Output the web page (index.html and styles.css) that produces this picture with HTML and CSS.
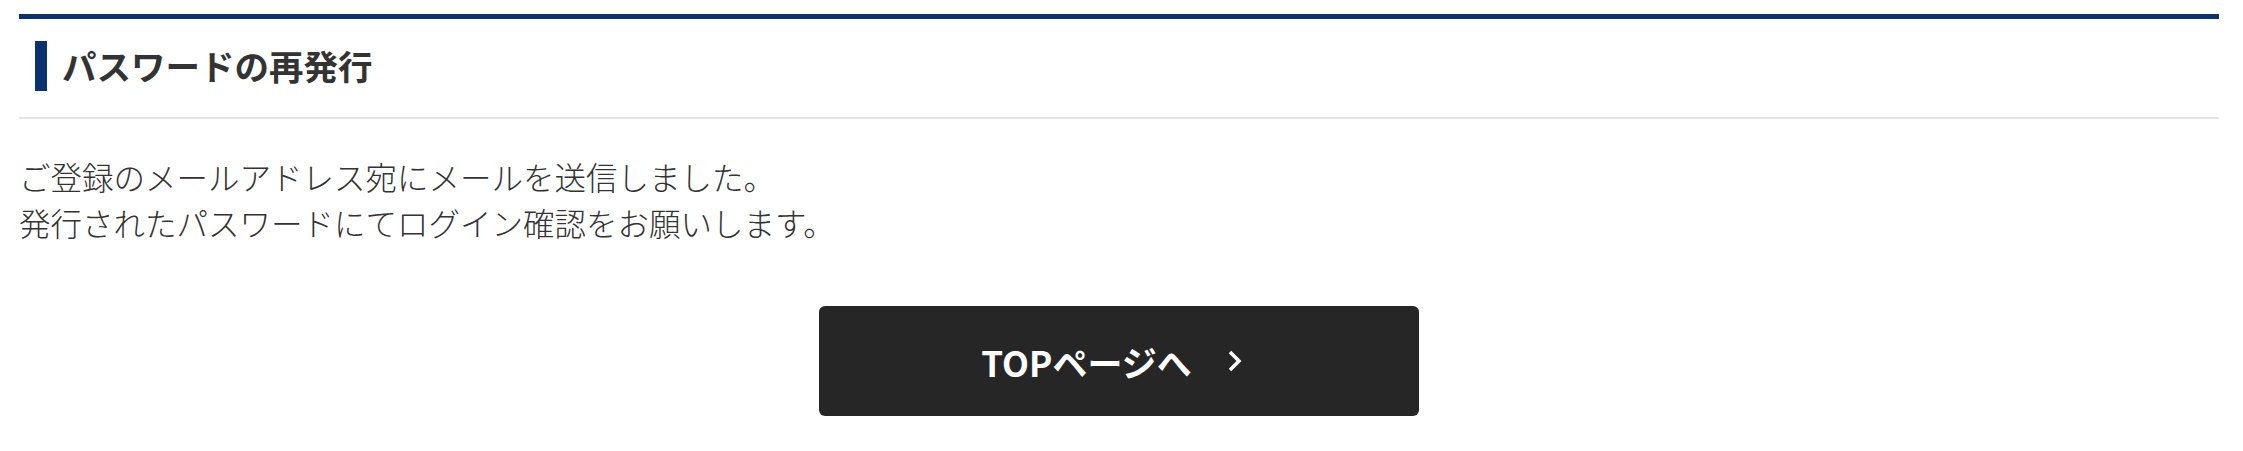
FILE: index.html
```html
<!DOCTYPE html>
<html lang="ja">
<head>
    <meta charset="UTF-8">
    <meta name="viewport" content="width=device-width, initial-scale=1.0">
    <title>パスワードの再発行</title>
    <link rel="stylesheet" href="styles.css">
</head>
<body>
    <div class="container">
        <div class="page-head">
            <h1>パスワードの再発行</h1>
        </div>
        <p class="message">
            ご登録のメールアドレス宛にメールを送信しました。<br>
            発行されたパスワードにてログイン確認をお願いします。
        </p>
        <div class="btn-area">
            <a class="btn" href="#">
                <span>TOPページへ</span>
                <svg class="btn-arrow" width="14" height="22" viewBox="0 0 14 22">
                    <polyline points="2,2 11,11 2,20" fill="none" stroke="#fff" stroke-width="3.5"/>
                </svg>
            </a>
        </div>
    </div>
</body>
</html>
```

FILE: styles.css
```css
body {
    font-family: "Noto Sans CJK JP", "Noto Sans", sans-serif;
    margin: 0;
    padding: 0;
    background-color: #fff;
    color: #333;
}
.container {
    padding: 14px 24px 30px 19px;
}
.page-head {
    display: flex;
    align-items: center;
    padding: 22px 0 26px 16px;
    border-top: 5px solid #0b3170;
    border-bottom: 2px solid #e5e5e5;
}
.page-head::before {
    content: "";
    display: block;
    width: 12px;
    height: 50px;
    margin-right: 15px;
    background-color: #0b3170;
}
h1 {
    margin: 0;
    font-size: 34.5px;
    line-height: 1.2;
    font-weight: bold;
    color: #333;
}
.message {
    margin: 34px 0 0;
    font-size: 31.5px;
    line-height: 46px;
    font-weight: 300;
    color: #333;
}
.btn-area {
    display: flex;
    justify-content: center;
    margin-top: 61px;
}
.btn {
    display: flex;
    align-items: center;
    justify-content: center;
    width: 600px;
    height: 110px;
    background-color: #262626;
    border-radius: 6px;
    color: #fff;
    font-size: 35px;
    font-weight: bold;
    text-decoration: none;
}
.btn-arrow {
    margin-left: 36px;
    margin-right: 15px;
}
```
